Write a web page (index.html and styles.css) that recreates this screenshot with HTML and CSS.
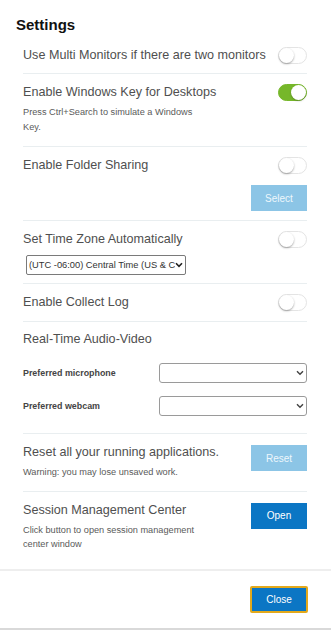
FILE: index.html
```html
<!DOCTYPE html>
<html>
<head>
<meta charset="utf-8">
<link rel="stylesheet" href="styles.css">
</head>
<body>
<div class="dialog">
  <h1 class="title">Settings</h1>
  <div class="content">
    <div class="row">
      <div class="line">
        <span class="label">Use Multi Monitors if there are two monitors</span>
        <span class="toggle"><span class="knob"></span></span>
      </div>
    </div>
    <div class="row r2">
      <div class="line">
        <span class="label">Enable Windows Key for Desktops</span>
        <span class="toggle on"><span class="knob"></span></span>
      </div>
      <p class="desc narrow">Press Ctrl+Search to simulate a Windows Key.</p>
    </div>
    <div class="row r3">
      <div class="line">
        <span class="label">Enable Folder Sharing</span>
        <span class="toggle"><span class="knob"></span></span>
      </div>
      <div class="btnline"><button class="btn light">Select</button></div>
    </div>
    <div class="row r4">
      <div class="line">
        <span class="label">Set Time Zone Automatically</span>
        <span class="toggle"><span class="knob"></span></span>
      </div>
      <div class="sel tz">
        <select><option>(UTC -06:00) Central Time (US &amp; Canada)</option></select>
        <svg class="chev" width="8" height="6" viewBox="0 0 8 6"><path d="M1 1.2 L4 4.3 L7 1.2" fill="none" stroke="#222" stroke-width="1.6"/></svg>
      </div>
    </div>
    <div class="row r5">
      <div class="line">
        <span class="label">Enable Collect Log</span>
        <span class="toggle"><span class="knob"></span></span>
      </div>
    </div>
    <div class="row r6">
      <div class="line"><span class="label">Real-Time Audio-Video</span></div>
      <div class="field f1">
        <span class="flabel">Preferred microphone</span>
        <div class="sel wide">
          <select><option></option></select>
          <svg class="chev" width="8" height="6" viewBox="0 0 8 6"><path d="M1 1.2 L4 4.3 L7 1.2" fill="none" stroke="#444" stroke-width="1.4"/></svg>
        </div>
      </div>
      <div class="field f2">
        <span class="flabel">Preferred webcam</span>
        <div class="sel wide">
          <select><option></option></select>
          <svg class="chev" width="8" height="6" viewBox="0 0 8 6"><path d="M1 1.2 L4 4.3 L7 1.2" fill="none" stroke="#444" stroke-width="1.4"/></svg>
        </div>
      </div>
    </div>
    <div class="row r7">
      <div class="line top">
        <div class="col">
          <span class="label">Reset all your running applications.</span>
          <p class="desc">Warning: you may lose unsaved work.</p>
        </div>
        <button class="btn light">Reset</button>
      </div>
    </div>
    <div class="row r8 last">
      <div class="line top">
        <div class="col">
          <span class="label">Session Management Center</span>
          <p class="desc narrow2">Click button to open session management center window</p>
        </div>
        <button class="btn blue">Open</button>
      </div>
    </div>
  </div>
  <div class="footer">
    <button class="btn blue close">Close</button>
  </div>
</div>
</body>
</html>
```
FILE: styles.css
```css
* { box-sizing: border-box; }
html, body { margin: 0; padding: 0; background: #fff; }
body { font-family: "Liberation Sans", Arial, Helvetica, sans-serif; color: #4d4d4d; }
.dialog { width: 331px; height: 630px; display: flex; flex-direction: column; border-bottom: 2px solid #d9d9d9; }
.title { margin: 0; padding: 16px 0 0 16px; font-size: 15px; line-height: 18px; font-weight: bold; color: #111; height: 38px; }
.content { padding: 0 24px 0 23px; flex: 1; }
.row { border-bottom: 1px solid #e9eef0; padding: 8px 0 9px; }
.row.last { border-bottom: none; }
.line { display: flex; justify-content: space-between; align-items: center; }
.line.top { align-items: flex-start; }
.label { font-size: 12.6px; line-height: 18px; color: #4f4f4f; white-space: nowrap; }
.desc { margin: 4px 0 0; font-size: 9.2px; line-height: 14.5px; color: #5a5a5a; }
.desc.narrow { width: 175px; }
.desc.narrow2 { width: 180px; }
.col { display: flex; flex-direction: column; }
.toggle { width: 29px; height: 17px; border-radius: 9px; border: 1px solid #e4e4e4; background: #fff; position: relative; flex: none; }
.toggle .knob { position: absolute; top: 0; left: 0; width: 15px; height: 15px; border-radius: 50%; background: #fff; box-shadow: 0 1px 2px rgba(0,0,0,0.35); }
.toggle.on { background: #76b72a; border-color: #76b72a; }
.toggle.on .knob { left: 12px; box-shadow: 0 1px 2px rgba(0,0,0,0.25); }
.r2 { padding: 9px 0 12px; }
.r3 { padding: 9px 0 9px; }
.btnline { display: flex; justify-content: flex-end; margin-top: 11px; }
.btn { width: 56px; height: 26px; border: none; font-family: "Liberation Sans", Arial, sans-serif; font-size: 10px; color: #fff; padding: 0; flex: none; }
.btn.light { background: #8cc5e6; color: #eef7fc; }
.btn.blue { background: #0b76c4; }
.r4 { padding: 9px 0 8px; }
.sel { position: relative; }
.sel select { appearance: none; -webkit-appearance: none; display: block; border: 1px solid #7a7a7a; border-radius: 2px; background: #fff; font-family: "Liberation Sans", Arial, sans-serif; font-size: 9.3px; color: #333; padding: 0 10px 0 2px; margin: 0; }
.sel .chev { position: absolute; top: 7px; right: 3px; }
.tz { margin: 7px 0 0 3px; width: 160px; }
.tz select { width: 160px; height: 20px; }
.r5 { padding: 9px 0 10px; }
.r6 { padding: 8px 0 17px; }
.field { display: flex; justify-content: space-between; align-items: center; }
.f1 { margin-top: 15px; }
.f2 { margin-top: 13px; }
.flabel { font-size: 8.9px; font-weight: bold; color: #444; }
.wide select { width: 148px; height: 20px; border-color: #9a9a9a; border-radius: 3px; }
.r7 { padding: 9px 0 11px; }
.r7 .btn { margin-top: 2px; }
.r8 { padding: 9px 0 0; }
.r8 .btn { margin-top: 2px; }
.footer { border-top: 2px solid #eeeeee; height: 59px; display: flex; justify-content: flex-end; padding: 15px 23px 0 0; }
.btn.close { width: 58px; height: 27px; border: 2px solid #e3a91b; border-radius: 2px; }
```
